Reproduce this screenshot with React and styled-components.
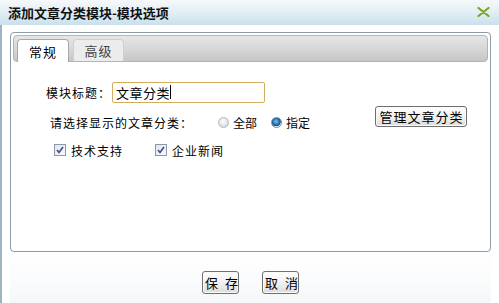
import styled, { createGlobalStyle } from "styled-components";

const GlobalStyle = createGlobalStyle`
  html, body {
    margin: 0;
    padding: 0;
    background: #ffffff;
  }
  body {
    font-family: "Noto Sans CJK SC", "DejaVu Sans", sans-serif;
    font-size: 12px;
    color: #000;
  }
`;

const Dialog = styled.div`
  width: 499px;
  height: 303px;
  display: flex;
  flex-direction: column;
  background: #fff;
  overflow: hidden;
`;

const Header = styled.div`
  height: 25px;
  flex: none;
  display: flex;
  align-items: center;
  justify-content: space-between;
  padding: 0 9px 0 8px;
  background: linear-gradient(to bottom, #f6f9fb 0%, #e2eef5 50%, #c9e0ed 100%);
`;

const Title = styled.div`
  font-weight: bold;
  font-size: 13px;
  color: #111;
  line-height: 25px;
`;

const Close = styled.svg`
  width: 13px;
  height: 10px;
  margin-top: -1px;
`;

const Body = styled.div`
  flex: 1;
  display: flex;
  flex-direction: column;
  border-left: 2px solid #9fb4c2;
  padding: 7px 8px 0 8px;
`;

const Panel = styled.div`
  height: 220px;
  box-sizing: border-box;
  border: 1px solid #8c9ca8;
  border-radius: 4px;
  padding: 2px;
  display: flex;
  flex-direction: column;
`;

const TabBar = styled.div`
  height: 27px;
  box-sizing: border-box;
  display: flex;
  align-items: flex-end;
  gap: 4px;
  padding-left: 3px;
  border: 1px solid #b4b4b4;
  border-radius: 4px;
  background: linear-gradient(to bottom, #e6e6e6 0%, #d6d6d6 55%, #c6c6c6 100%);
`;

const Tab = styled.div`
  width: ${(p) => (p.$active ? 52 : 51)}px;
  height: ${(p) => (p.$active ? 23 : 22)}px;
  box-sizing: border-box;
  display: flex;
  align-items: center;
  justify-content: center;
  border: 1px solid ${(p) => (p.$active ? "#a9a9a9" : "#cfcfcf")};
  border-bottom: none;
  border-radius: 4px 4px 0 0;
  background: ${(p) => (p.$active ? "#ffffff" : "#ececec")};
  color: ${(p) => (p.$active ? "#000" : "#444")};
  font-size: 13px;
  letter-spacing: 1px;
  margin-bottom: ${(p) => (p.$active ? "-1px" : "0")};
`;

const Content = styled.div`
  display: flex;
  flex-direction: column;
  padding: 19px 0 0 33px;
`;

const Row = styled.div`
  display: flex;
  align-items: center;
  height: ${(p) => p.$h || 22}px;
  margin-top: ${(p) => p.$mt || 0}px;
  padding-left: ${(p) => p.$pl || 0}px;
`;

const Label = styled.span`
  white-space: nowrap;
  letter-spacing: 1px;
`;

const TextInput = styled.div`
  width: 153px;
  height: 21px;
  box-sizing: border-box;
  margin-left: 1px;
  border: 1px solid #d2ad5c;
  border-radius: 2px;
  display: flex;
  align-items: center;
  padding-left: 3px;
  font-size: 13px;
  letter-spacing: 0.5px;
`;

const Caret = styled.span`
  display: inline-block;
  width: 1px;
  height: 14px;
  background: #000;
`;

const RadioGroup = styled.div`
  display: flex;
  align-items: center;
  margin-left: 25px;
`;

const RadioItem = styled.label`
  display: flex;
  align-items: center;
  gap: 4px;
  margin-right: 14px;
`;

const RadioDot = styled.span`
  width: 11px;
  height: 11px;
  border-radius: 50%;
  box-sizing: border-box;
  border: 1px solid ${(p) => (p.$on ? "#6f8da3" : "#b9b9b9")};
  background: ${(p) =>
    p.$on
      ? "radial-gradient(circle at 45% 40%, #7fc3ec 0%, #1f6fb0 45%, #1a4d7a 60%, #e8eef2 68%)"
      : "radial-gradient(circle at 45% 40%, #ffffff 0%, #e6e6e6 50%, #cfcfcf 100%)"};
`;

const Btn = styled.button`
  font-family: "Noto Sans CJK SC", "DejaVu Sans", sans-serif;
  font-size: 13px;
  height: ${(p) => p.$h || 23}px;
  width: ${(p) => p.$w}px;
  box-sizing: border-box;
  padding: 0 0 0 ${(p) => p.$ls || 0}px;
  border: 1px solid #6f6f6f;
  border-radius: 3px;
  background: linear-gradient(to bottom, #ffffff 0%, #f1f1f1 50%, #dcdcdc 100%);
  color: #000;
  white-space: pre;
  letter-spacing: ${(p) => p.$ls || 0}px;
  box-shadow: inset 0 0 0 1px #fafafa;
`;

const ManageBtn = styled(Btn)`
  margin-left: auto;
  margin-right: 21px;
  margin-top: -11px;
`;

const CheckItem = styled.label`
  display: flex;
  align-items: center;
  gap: 5px;
  width: 101px;
  letter-spacing: 1px;
`;

const CheckBox = styled.span`
  width: 12px;
  height: 12px;
  box-sizing: border-box;
  border: 1px solid #8b98a6;
  background: linear-gradient(135deg, #e2e6ea 0%, #f8f9fa 100%);
  display: flex;
  align-items: center;
  justify-content: center;
`;

const Footer = styled.div`
  flex: 1;
  display: flex;
  justify-content: center;
  align-items: flex-start;
  gap: 23px;
  padding-top: 19px;
  background: linear-gradient(to bottom, #ffffff 0%, #fafbfc 60%, #f4f6f7 100%);
`;

function Radio({ on, children }) {
  return (
    <RadioItem>
      <RadioDot $on={on} />
      {children}
    </RadioItem>
  );
}

function Check({ children }) {
  return (
    <CheckItem>
      <CheckBox>
        <svg width="8" height="8" viewBox="0 0 8 8">
          <path d="M1 4 L3 6.5 L7 1" fill="none" stroke="#3c4c9c" strokeWidth="1.6" />
        </svg>
      </CheckBox>
      {children}
    </CheckItem>
  );
}

export default function App() {
  return (
    <>
      <GlobalStyle />
      <Dialog>
        <Header>
          <Title>添加文章分类模块-模块选项</Title>
          <Close viewBox="0 0 13 10">
            <path d="M1.5 1 L11.5 9 M11.5 1 L1.5 9" stroke="#7aa61e" strokeWidth="2.2" strokeLinecap="round" />
          </Close>
        </Header>
        <Body>
          <Panel>
            <TabBar>
              <Tab $active>常规</Tab>
              <Tab>高级</Tab>
            </TabBar>
            <Content>
              <Row>
                <Label>模块标题：</Label>
                <TextInput>
                  文章分类
                  <Caret />
                </TextInput>
              </Row>
              <Row $mt={8} $pl={4}>
                <Label>请选择显示的文章分类：</Label>
                <RadioGroup>
                  <Radio>全部</Radio>
                  <Radio on>指定</Radio>
                </RadioGroup>
                <ManageBtn $w={92} $h={21} $ls={1}>管理文章分类</ManageBtn>
              </Row>
              <Row $mt={6} $pl={8}>
                <Check>技术支持</Check>
                <Check>企业新闻</Check>
              </Row>
            </Content>
          </Panel>
          <Footer>
            <Btn $w={37} $ls={2}>保 存</Btn>
            <Btn $w={37} $ls={2}>取 消</Btn>
          </Footer>
        </Body>
      </Dialog>
    </>
  );
}
